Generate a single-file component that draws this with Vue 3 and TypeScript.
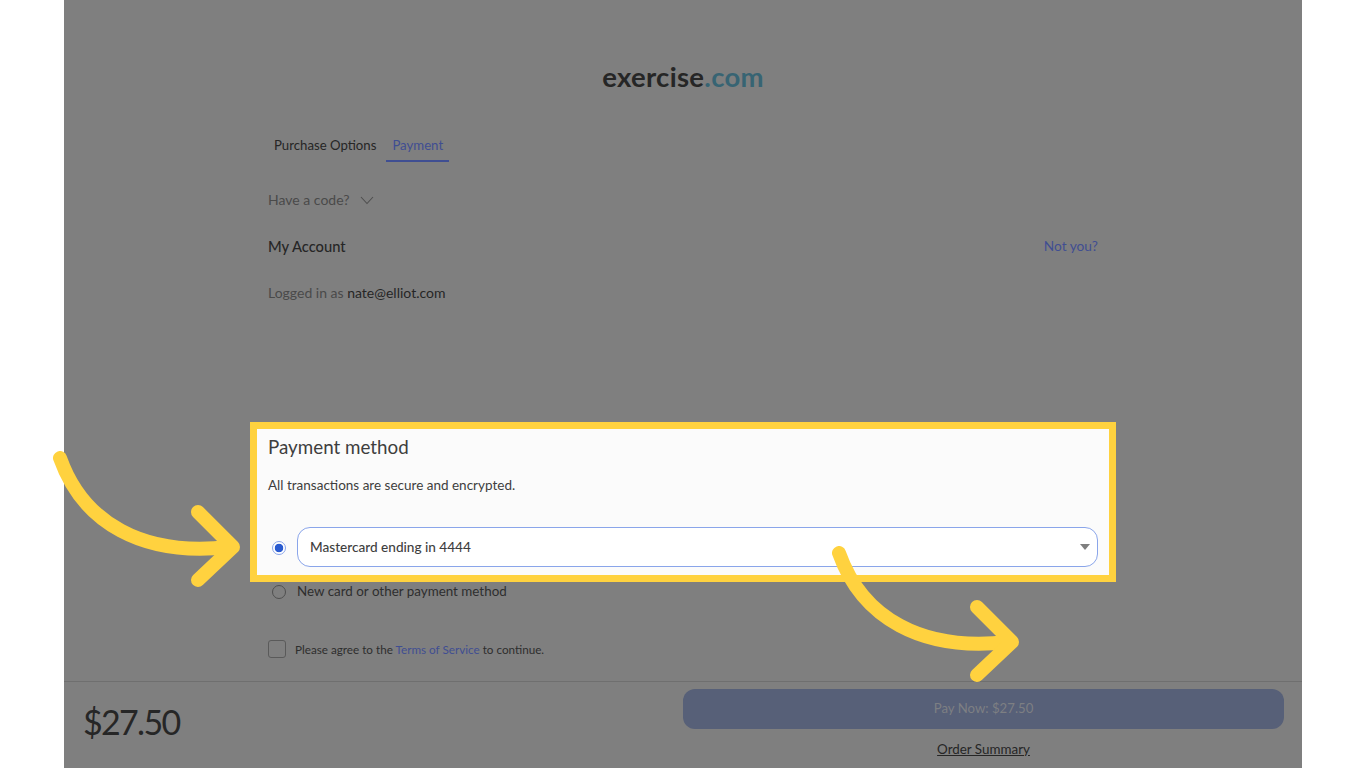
<script setup lang="ts">
const tabs = [
  { label: 'Purchase Options', active: false },
  { label: 'Payment', active: true },
]
const arrows = ['arrow-left', 'arrow-right']
</script>

<template>
  <div class="stage">
    <main class="panel">
      <div class="logo">exercise<span>.com</span></div>

      <div class="content">
        <nav class="tabs">
          <a v-for="tab in tabs" :key="tab.label" class="tab" :class="{ active: tab.active }">{{ tab.label }}</a>
        </nav>

        <div class="code">
          Have a code?
          <svg width="14" height="9" viewBox="0 0 14 9" fill="none">
            <path d="M1 1l6 6.5L13 1" stroke="#4f4f4f" stroke-width="1.1" />
          </svg>
        </div>

        <div class="account">
          <h2>My Account</h2>
          <a>Not you?</a>
        </div>
        <p class="logged">Logged in as <b>nate@elliot.com</b></p>

        <section class="highlight">
          <h2>Payment method</h2>
          <p>All transactions are secure and encrypted.</p>
          <div class="method">
            <span class="radio on"></span>
            <div class="select">
              Mastercard ending in 4444
              <i class="caret"></i>
            </div>
          </div>
        </section>

        <label class="method-new">
          <span class="radio"></span>
          <span class="new-label">New card or other payment method</span>
        </label>

        <label class="terms">
          <span class="check"></span>
          <span class="terms-text">Please agree to the <a>Terms of Service</a> to continue.</span>
        </label>
      </div>

      <footer class="bar">
        <div class="price">$27.50</div>
        <div class="pay">
          <button>Pay Now: $27.50</button>
          <a>Order Summary</a>
        </div>
      </footer>
    </main>

    <svg v-for="a in arrows" :key="a" class="arrow" :class="a" width="200" height="150" viewBox="0 0 200 150" fill="none">
      <path d="M7 7C30 72 90 106 176 96" stroke="#ffd23f" stroke-width="14" stroke-linecap="round" />
      <path d="M145 61L180 96L145 129" stroke="#ffd23f" stroke-width="14" stroke-linecap="round" stroke-linejoin="round" />
    </svg>
  </div>
</template>

<style>
html,
body {
  margin: 0;
  background: #fff;
}
</style>

<style scoped>
.stage {
  position: relative;
  width: 1366px;
  height: 768px;
  overflow: hidden;
  background: #fff;
  font-family: Lato, "Open Sans", sans-serif;
  color: #262626;
}

.panel {
  margin-left: 64px;
  width: 1238px;
  height: 768px;
  background: #7f7f7f;
  display: flex;
  flex-direction: column;
}

.logo {
  margin-top: 60px;
  text-align: center;
  font-size: 27.5px;
  line-height: 34px;
  font-weight: 700;
  color: #262626;
  letter-spacing: 0.3px;
}

.logo span {
  color: #376473;
}

.content {
  width: 830px;
  margin: 0 auto;
  flex: 1;
}

.tabs {
  display: flex;
  margin-top: 30px;
  height: 38px;
}

.tab {
  box-sizing: border-box;
  padding: 4px 6px 0;
  margin-right: 4px;
  font-size: 13.2px;
  line-height: 34px;
  height: 38px;
  color: #262626;
}

.tab.active {
  color: #3f4e92;
  border-bottom: 2px solid #3f4e92;
}

.code {
  display: flex;
  align-items: center;
  gap: 11px;
  margin-top: 28px;
  font-size: 14px;
  line-height: 20px;
  color: #4a4a4a;
}

.account {
  display: flex;
  justify-content: space-between;
  align-items: center;
  margin-top: 23px;
  height: 24px;
}

.account h2 {
  margin: 1px 0 0;
  font-size: 14.7px;
  font-weight: 500;
  color: #262626;
}

.account a {
  font-size: 13.7px;
  color: #3f4e92;
}

.logged {
  margin: 26px 0 0;
  font-size: 14px;
  line-height: 20px;
  color: #4a4a4a;
}

.logged b {
  font-weight: 400;
  color: #262626;
}

.highlight {
  box-sizing: border-box;
  height: 160px;
  margin: 119px -18px 0;
  padding: 0 11px;
  border: 7px solid #ffd23f;
  background: #fbfbfb;
  color: #3e3e3e;
}

.highlight h2 {
  margin: 6px 0 0;
  font-size: 18.8px;
  line-height: 24px;
  font-weight: 400;
}

.highlight p {
  margin: 16px 0 0;
  font-size: 13.5px;
  line-height: 20px;
}

.method {
  display: flex;
  align-items: center;
  margin-top: 32px;
}

.radio {
  box-sizing: border-box;
  flex: none;
  width: 14px;
  height: 14px;
  margin: 0 11px 0 4px;
  border: 1.5px solid #4f4f4f;
  border-radius: 50%;
}

.radio.on {
  margin-top: 2px;
  border-color: #8aa5ea;
  background: radial-gradient(circle, #2a5bd0 0 4px, #fff 4.6px);
}

.select {
  position: relative;
  box-sizing: border-box;
  flex: 1;
  height: 40px;
  padding-left: 12px;
  border: 1px solid #8aa5ea;
  border-radius: 13px;
  background: #fff;
  font-size: 13.6px;
  font-weight: 500;
  line-height: 38px;
  color: #3e3e3e;
}

.caret {
  position: absolute;
  top: 16px;
  right: 7px;
  border-left: 5px solid transparent;
  border-right: 5px solid transparent;
  border-top: 6px solid #7f7f7f;
}

.method-new {
  display: flex;
  align-items: center;
  height: 20px;
  font-size: 13.4px;
  color: #2e2e2e;
}

.new-label {
  margin-top: -2px;
}

.terms {
  display: flex;
  align-items: center;
  gap: 9px;
  margin-top: 38px;
  font-size: 11.7px;
  color: #2e2e2e;
}

.terms-text {
  margin-top: -1px;
}

.terms a {
  color: #3f4e92;
}

.check {
  box-sizing: border-box;
  width: 18px;
  height: 18px;
  border: 1.5px solid #5a5a5a;
  border-radius: 3px;
}

.bar {
  box-sizing: border-box;
  height: 87px;
  padding: 7px 18px 0 19px;
  border-top: 1px solid #6f6f6f;
  display: flex;
  justify-content: space-between;
}

.price {
  margin-top: 13px;
  font-size: 34px;
  line-height: 40px;
  letter-spacing: -1.7px;
  color: #262626;
}

.pay {
  width: 601px;
  display: flex;
  flex-direction: column;
  align-items: center;
}

.pay button {
  width: 100%;
  height: 40px;
  padding: 0 0 2px;
  border: 0;
  border-radius: 12px;
  background: #576078;
  font-family: inherit;
  font-size: 13.2px;
  color: #7d7f83;
}

.pay a {
  margin-top: 10px;
  font-size: 13.4px;
  line-height: 20px;
  color: #262626;
  text-decoration: underline;
}

.arrow {
  position: absolute;
}

.arrow-left {
  left: 53px;
  top: 451px;
}

.arrow-right {
  left: 832px;
  top: 546px;
}
</style>
